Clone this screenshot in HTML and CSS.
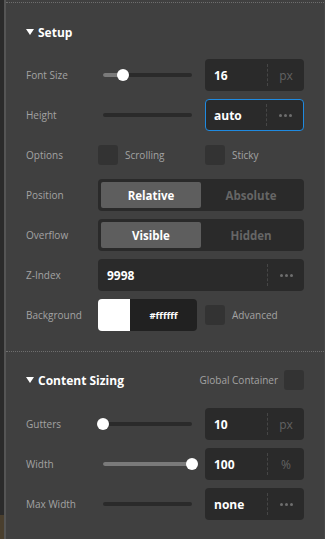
FILE: index.html
```html
<!DOCTYPE html>
<html>
<head>
<meta charset="utf-8">
<link rel="stylesheet" href="styles.css">
</head>
<body>
<div class="app">
  <div class="rail"><div class="rail-accent"></div></div>
  <div class="panel">
    <section class="section section-first">
      <h2 class="heading">
        <span class="title"><svg class="caret" width="8" height="6" viewBox="0 0 8 6"><path d="M0 0H8L4 6Z" fill="#fff"/></svg>Setup</span>
      </h2>
      <div class="rows">
        <div class="row">
          <span class="label">Font Size</span>
          <div class="slider"><div class="track"><div class="fill" style="width:22.5%"></div><div class="knob" style="left:22.5%"></div></div></div>
          <div class="input"><span class="value">16</span><span class="divider"></span><span class="unit">px</span></div>
        </div>
        <div class="row">
          <span class="label">Height</span>
          <div class="slider"><div class="track"></div></div>
          <div class="input input-focus"><span class="value">auto</span><span class="divider"></span><span class="unit"><svg width="13" height="3" viewBox="0 0 13 3"><circle cx="1.5" cy="1.5" r="1.5" fill="#6e6e6e"/><circle cx="6.5" cy="1.5" r="1.5" fill="#6e6e6e"/><circle cx="11.5" cy="1.5" r="1.5" fill="#6e6e6e"/></svg></span></div>
        </div>
        <div class="row">
          <span class="label">Options</span>
          <label class="opt"><span class="check"></span><span class="opt-text">Scrolling</span></label>
          <label class="opt"><span class="check"></span><span class="opt-text">Sticky</span></label>
        </div>
        <div class="row">
          <span class="label">Position</span>
          <div class="segmented"><span class="seg seg-active">Relative</span><span class="seg">Absolute</span></div>
        </div>
        <div class="row">
          <span class="label">Overflow</span>
          <div class="segmented"><span class="seg seg-active">Visible</span><span class="seg">Hidden</span></div>
        </div>
        <div class="row">
          <span class="label">Z-Index</span>
          <div class="input input-wide"><span class="value">9998</span><span class="divider"></span><span class="unit"><svg width="13" height="3" viewBox="0 0 13 3"><circle cx="1.5" cy="1.5" r="1.5" fill="#6e6e6e"/><circle cx="6.5" cy="1.5" r="1.5" fill="#6e6e6e"/><circle cx="11.5" cy="1.5" r="1.5" fill="#6e6e6e"/></svg></span></div>
        </div>
        <div class="row">
          <span class="label">Background</span>
          <div class="color"><span class="swatch"></span><span class="hex">#ffffff</span></div>
          <label class="opt"><span class="check"></span><span class="opt-text">Advanced</span></label>
        </div>
      </div>
    </section>
    <section class="section section-second">
      <h2 class="heading">
        <span class="title"><svg class="caret" width="8" height="6" viewBox="0 0 8 6"><path d="M0 0H8L4 6Z" fill="#fff"/></svg>Content Sizing</span>
        <label class="global"><span class="opt-text">Global Container</span><span class="check"></span></label>
      </h2>
      <div class="rows">
        <div class="row">
          <span class="label">Gutters</span>
          <div class="slider"><div class="track"><div class="fill" style="width:0%"></div><div class="knob" style="left:0%"></div></div></div>
          <div class="input"><span class="value">10</span><span class="divider"></span><span class="unit">px</span></div>
        </div>
        <div class="row">
          <span class="label">Width</span>
          <div class="slider"><div class="track"><div class="fill" style="width:100%"></div><div class="knob" style="left:100%"></div></div></div>
          <div class="input"><span class="value">100</span><span class="divider"></span><span class="unit">%</span></div>
        </div>
        <div class="row">
          <span class="label">Max Width</span>
          <div class="slider"><div class="track"></div></div>
          <div class="input"><span class="value">none</span><span class="divider"></span><span class="unit"><svg width="13" height="3" viewBox="0 0 13 3"><circle cx="1.5" cy="1.5" r="1.5" fill="#6e6e6e"/><circle cx="6.5" cy="1.5" r="1.5" fill="#6e6e6e"/><circle cx="11.5" cy="1.5" r="1.5" fill="#6e6e6e"/></svg></span></div>
        </div>
      </div>
    </section>
  </div>
</div>
</body>
</html>
```
FILE: styles.css
```css
html, body {
  margin: 0;
  padding: 0;
  background: #404040;
}
body {
  font-family: "Open Sans", "Noto Sans", "DejaVu Sans", sans-serif;
  font-size: 10px;
  color: #a3a3a3;
}
.app {
  display: flex;
  width: 325px;
  height: 539px;
  overflow: hidden;
}
.rail {
  flex: none;
  width: 4px;
  background: #2b2b2b;
  display: flex;
  flex-direction: column;
  justify-content: flex-end;
}
.rail-accent {
  height: 24px;
  background: #4a3f2e;
}
.panel {
  flex: 1;
  background: #404040;
  border-left: 2px solid #555555;
  border-right: 1px solid #474747;
  padding-top: 2px;
}
.section {
  border-top: 1px dotted #6e6e6e;
  padding: 19px 20px 20px 20px;
}
.section-second {
  padding-top: 18px;
}
.heading {
  margin: 0 0 17px 0;
  height: 20px;
  display: flex;
  align-items: center;
  justify-content: space-between;
  font-size: 12px;
  font-weight: 700;
  color: #ffffff;
}
.section-second .heading {
  margin-bottom: 18px;
}
.title {
  display: flex;
  align-items: center;
  gap: 4px;
}
.caret {
  display: block;
}
.rows {
  display: flex;
  flex-direction: column;
  gap: 8px;
}
.row {
  display: grid;
  grid-template-columns: 64px 99px 99px;
  column-gap: 8px;
  height: 32px;
  align-items: center;
}
.label {
  color: #a3a3a3;
}
.slider {
  padding: 0 5px;
}
.track {
  position: relative;
  height: 4px;
  background: #2a2a2a;
  border-radius: 2px;
}
.fill {
  height: 4px;
  background: #7a7a7a;
  border-radius: 2px;
}
.knob {
  position: absolute;
  top: -4px;
  width: 12px;
  height: 12px;
  margin-left: -6px;
  border-radius: 50%;
  background: #ffffff;
}
.input {
  box-sizing: border-box;
  display: flex;
  align-items: center;
  height: 32px;
  background: #2a2a2a;
  border-radius: 4px;
}
.input-wide {
  grid-column: 2 / span 2;
}
.input-focus {
  border: 1px solid #1f8ae0;
}
.input-focus .value {
  padding-left: 8px;
}
.value {
  flex: 1;
  padding-left: 9px;
  font-size: 12px;
  font-weight: 700;
  color: #ffffff;
}
.divider {
  height: 22px;
  border-left: 1px dashed #464646;
}
.unit {
  width: 36px;
  display: flex;
  align-items: center;
  justify-content: center;
  font-size: 12px;
  color: #626262;
}
.opt {
  display: flex;
  align-items: center;
  gap: 7px;
}
.check {
  width: 20px;
  height: 20px;
  border-radius: 3px;
  background: #333333;
  flex: none;
}
.opt-text {
  color: #a3a3a3;
  font-size: 10px;
  font-weight: 400;
}
.segmented {
  grid-column: 2 / span 2;
  box-sizing: border-box;
  height: 32px;
  padding: 3px;
  display: grid;
  grid-template-columns: 1fr 1fr;
  background: #2a2a2a;
  border-radius: 4px;
}
.seg {
  display: flex;
  align-items: center;
  justify-content: center;
  font-size: 11.5px;
  font-weight: 700;
  color: #666666;
  border-radius: 2px;
}
.seg-active {
  background: #5e5e5e;
  color: #ffffff;
}
.color {
  display: flex;
  height: 32px;
  border-radius: 4px;
  overflow: hidden;
}
.swatch {
  width: 32px;
  background: #ffffff;
}
.hex {
  flex: 1;
  display: flex;
  align-items: center;
  justify-content: center;
  background: #212121;
  color: #ffffff;
  font-size: 9.5px;
  font-weight: 700;
}
.global {
  display: flex;
  align-items: center;
  gap: 6px;
}
```
